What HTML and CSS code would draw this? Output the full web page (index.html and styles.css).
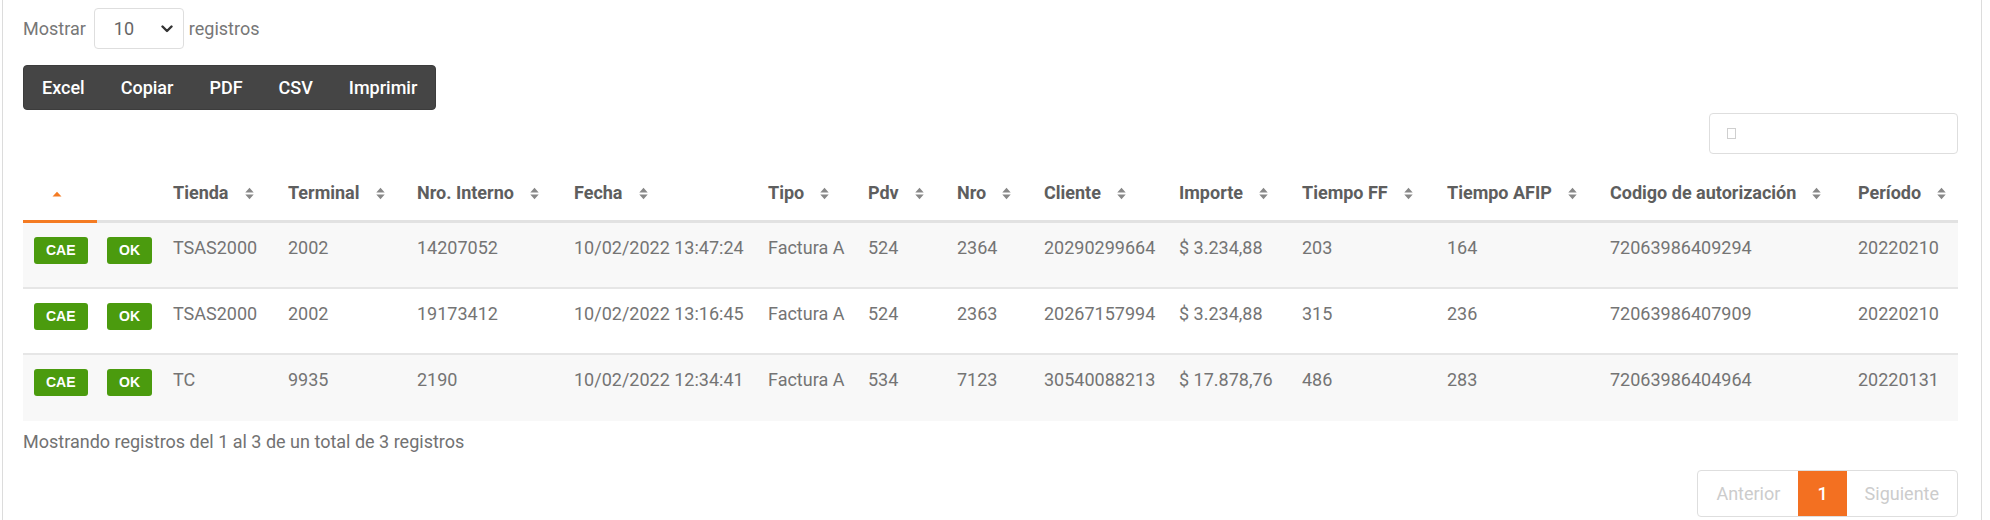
FILE: index.html
```html
<!DOCTYPE html>
<html lang="es">
<head>
<meta charset="utf-8">
<title>Registros</title>
<link rel="stylesheet" href="styles.css">
</head>
<body>
<div class="card">
  <div class="length">
    <span>Mostrar</span>
    <div class="select">
      <span>10</span>
      <svg class="chev" width="12" height="8" viewBox="0 0 12 8"><path d="M1.5 1.5 L6 6 L10.5 1.5" fill="none" stroke="#333" stroke-width="2.4" stroke-linecap="round" stroke-linejoin="round"/></svg>
    </div>
    <span>registros</span>
  </div>

  <div class="btn-group">
    <span class="btn">Excel</span>
    <span class="btn">Copiar</span>
    <span class="btn">PDF</span>
    <span class="btn">CSV</span>
    <span class="btn">Imprimir</span>
  </div>

  <div class="search-row">
    <div class="search"><span class="tofu"></span></div>
  </div>

  <table class="grid">
    <colgroup>
      <col style="width:74px"><col style="width:66px"><col style="width:115px"><col style="width:129px">
      <col style="width:157px"><col style="width:194px"><col style="width:100px"><col style="width:89px">
      <col style="width:87px"><col style="width:135px"><col style="width:123px"><col style="width:145px">
      <col style="width:163px"><col style="width:248px"><col style="width:110px">
    </colgroup>
    <thead>
      <tr>
        <th class="sorted"><svg class="asc" width="10" height="6" viewBox="0 0 10 6"><path d="M0.5 5.5 L5 0.8 L9.5 5.5 Z" fill="#f47b22"/></svg></th>
        <th class="plain"></th>
        <th>Tienda<svg class="si" width="9" height="13" viewBox="0 0 9 13"><path d="M0.3 5.6 L4.5 0.8 L8.7 5.6 Z M0.3 7.4 L8.7 7.4 L4.5 12.2 Z" fill="#888"/></svg></th>
        <th>Terminal<svg class="si" width="9" height="13" viewBox="0 0 9 13"><path d="M0.3 5.6 L4.5 0.8 L8.7 5.6 Z M0.3 7.4 L8.7 7.4 L4.5 12.2 Z" fill="#888"/></svg></th>
        <th>Nro. Interno<svg class="si" width="9" height="13" viewBox="0 0 9 13"><path d="M0.3 5.6 L4.5 0.8 L8.7 5.6 Z M0.3 7.4 L8.7 7.4 L4.5 12.2 Z" fill="#888"/></svg></th>
        <th>Fecha<svg class="si" width="9" height="13" viewBox="0 0 9 13"><path d="M0.3 5.6 L4.5 0.8 L8.7 5.6 Z M0.3 7.4 L8.7 7.4 L4.5 12.2 Z" fill="#888"/></svg></th>
        <th>Tipo<svg class="si" width="9" height="13" viewBox="0 0 9 13"><path d="M0.3 5.6 L4.5 0.8 L8.7 5.6 Z M0.3 7.4 L8.7 7.4 L4.5 12.2 Z" fill="#888"/></svg></th>
        <th>Pdv<svg class="si" width="9" height="13" viewBox="0 0 9 13"><path d="M0.3 5.6 L4.5 0.8 L8.7 5.6 Z M0.3 7.4 L8.7 7.4 L4.5 12.2 Z" fill="#888"/></svg></th>
        <th>Nro<svg class="si" width="9" height="13" viewBox="0 0 9 13"><path d="M0.3 5.6 L4.5 0.8 L8.7 5.6 Z M0.3 7.4 L8.7 7.4 L4.5 12.2 Z" fill="#888"/></svg></th>
        <th>Cliente<svg class="si" width="9" height="13" viewBox="0 0 9 13"><path d="M0.3 5.6 L4.5 0.8 L8.7 5.6 Z M0.3 7.4 L8.7 7.4 L4.5 12.2 Z" fill="#888"/></svg></th>
        <th>Importe<svg class="si" width="9" height="13" viewBox="0 0 9 13"><path d="M0.3 5.6 L4.5 0.8 L8.7 5.6 Z M0.3 7.4 L8.7 7.4 L4.5 12.2 Z" fill="#888"/></svg></th>
        <th>Tiempo FF<svg class="si" width="9" height="13" viewBox="0 0 9 13"><path d="M0.3 5.6 L4.5 0.8 L8.7 5.6 Z M0.3 7.4 L8.7 7.4 L4.5 12.2 Z" fill="#888"/></svg></th>
        <th>Tiempo AFIP<svg class="si" width="9" height="13" viewBox="0 0 9 13"><path d="M0.3 5.6 L4.5 0.8 L8.7 5.6 Z M0.3 7.4 L8.7 7.4 L4.5 12.2 Z" fill="#888"/></svg></th>
        <th>Codigo de autorización<svg class="si" width="9" height="13" viewBox="0 0 9 13"><path d="M0.3 5.6 L4.5 0.8 L8.7 5.6 Z M0.3 7.4 L8.7 7.4 L4.5 12.2 Z" fill="#888"/></svg></th>
        <th>Período<svg class="si" width="9" height="13" viewBox="0 0 9 13"><path d="M0.3 5.6 L4.5 0.8 L8.7 5.6 Z M0.3 7.4 L8.7 7.4 L4.5 12.2 Z" fill="#888"/></svg></th>
      </tr>
    </thead>
    <tbody>
      <tr class="odd">
        <td class="first"><span class="badge">CAE</span></td>
        <td><span class="badge">OK</span></td>
        <td>TSAS2000</td><td>2002</td><td>14207052</td><td>10/02/2022 13:47:24</td><td>Factura A</td><td>524</td><td>2364</td><td>20290299664</td><td>$ 3.234,88</td><td>203</td><td>164</td><td>72063986409294</td><td>20220210</td>
      </tr>
      <tr>
        <td class="first"><span class="badge">CAE</span></td>
        <td><span class="badge">OK</span></td>
        <td>TSAS2000</td><td>2002</td><td>19173412</td><td>10/02/2022 13:16:45</td><td>Factura A</td><td>524</td><td>2363</td><td>20267157994</td><td>$ 3.234,88</td><td>315</td><td>236</td><td>72063986407909</td><td>20220210</td>
      </tr>
      <tr class="odd last">
        <td class="first"><span class="badge">CAE</span></td>
        <td><span class="badge">OK</span></td>
        <td>TC</td><td>9935</td><td>2190</td><td>10/02/2022 12:34:41</td><td>Factura A</td><td>534</td><td>7123</td><td>30540088213</td><td>$ 17.878,76</td><td>486</td><td>283</td><td>72063986404964</td><td>20220131</td>
      </tr>
    </tbody>
  </table>

  <div class="info">Mostrando registros del 1 al 3 de un total de 3 registros</div>

  <div class="pager-row">
    <div class="pager">
      <span class="pg disabled">Anterior</span>
      <span class="pg active">1</span>
      <span class="pg disabled">Siguiente</span>
    </div>
  </div>
</div>
</body>
</html>
```

FILE: styles.css
```css
html, body {
  margin: 0;
  padding: 0;
  background: #ffffff;
  overflow: hidden;
}

body {
  font-family: Roboto, "Liberation Sans", Arial, sans-serif;
  font-size: 18px;
  line-height: 22px;
  color: #707070;
}

.card {
  box-sizing: border-box;
  margin-left: 2px;
  width: 1980px;
  height: 520px;
  border-left: 1px solid #dcdcdc;
  border-right: 1px solid #dcdcdc;
  padding: 8px 23px 0 20px;
}

/* length selector */
.length {
  display: flex;
  align-items: center;
  height: 41px;
  color: #777777;
}

.select {
  box-sizing: border-box;
  width: 90px;
  height: 41px;
  margin: 0 5px 0 8px;
  border: 1px solid #dedede;
  border-radius: 4px;
  display: flex;
  align-items: center;
  justify-content: space-between;
  padding: 0 10px 0 19px;
  color: #666666;
}

.chev {
  display: block;
}

/* button group */
.btn-group {
  display: inline-flex;
  margin-top: 16px;
  height: 45px;
  background: #454545;
  border: 1px solid #3c3c3c;
  border-radius: 4px;
  box-sizing: border-box;
}

.btn {
  display: flex;
  align-items: center;
  padding: 0 18px;
  color: #ffffff;
  font-weight: 500;
}

/* search */
.search-row {
  display: flex;
  justify-content: flex-end;
  margin-top: 3px;
}

.search {
  box-sizing: border-box;
  width: 249px;
  height: 41px;
  border: 1px solid #dedede;
  border-radius: 4px;
  display: flex;
  align-items: center;
  padding-left: 17px;
}

.tofu {
  display: block;
  box-sizing: border-box;
  width: 9px;
  height: 11px;
  border: 1px solid #cfcfcf;
}

/* table */
.grid {
  margin-top: 12px;
  width: 1935px;
  table-layout: fixed;
  border-collapse: separate;
  border-spacing: 0;
}

.grid th {
  text-align: left;
  font-weight: 700;
  color: #5e5e5e;
  padding: 16px 10px 16px;
  line-height: 22px;
  border-bottom: 3px solid #e2e2e2;
  white-space: nowrap;
}

.grid th.sorted {
  border-bottom-color: #f47b22;
  padding-left: 29px;
}

.asc {
  display: inline-block;
  vertical-align: 2px;
}

.si {
  display: inline-block;
  margin-left: 16px;
  vertical-align: -1px;
}

.grid td {
  padding: 14px 10px 28px;
  line-height: 22px;
  vertical-align: top;
  white-space: nowrap;
  border-bottom: 2px solid #e6e6e6;
  color: #747474;
}

.grid td.first {
  padding-left: 11px;
}

.grid tr.last td {
  border-bottom: none;
  padding-bottom: 30px;
}

.grid tr.odd td {
  background: #f8f8f8;
}

.badge {
  display: inline-block;
  vertical-align: top;
  height: 27px;
  line-height: 27px;
  margin-bottom: -5px;
  padding: 0 12px;
  background: #4b9b0e;
  color: #ffffff;
  border-radius: 3px;
  font-family: "Liberation Sans", Arial, sans-serif;
  font-weight: 700;
  font-size: 14px;
}

/* footer */
.info {
  margin-top: 10px;
  color: #727272;
}

.pager-row {
  display: flex;
  justify-content: flex-end;
  margin-top: 17px;
}

.pager {
  display: flex;
  border: 1px solid #dedede;
  border-radius: 4px;
  height: 47px;
  box-sizing: border-box;
  overflow: hidden;
}

.pg {
  display: flex;
  align-items: center;
  padding: 0 18px;
}

.pg.disabled {
  color: #cccccc;
}

.pg.active {
  background: #f37021;
  color: #ffffff;
  font-weight: 500;
  padding: 0 19px;
}
```
